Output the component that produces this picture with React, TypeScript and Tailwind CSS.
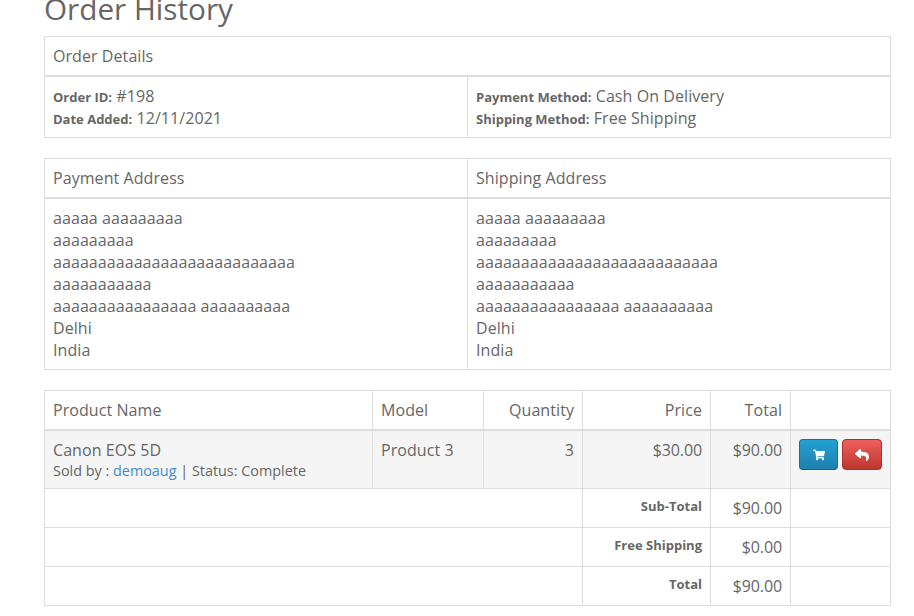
import type { ReactNode } from 'react';
import { FaShoppingCart, FaReply } from 'react-icons/fa';

const cell = 'border border-[#dddddd] p-2 align-top text-left font-normal';
const head = 'border border-b-2 border-[#dddddd] p-2 align-top font-normal';
const money = `${cell} !text-right tracking-[-0.1px]`;

const address = [
  'aaaaa aaaaaaaaa',
  'aaaaaaaaa',
  'aaaaaaaaaaaaaaaaaaaaaaaaaaa',
  'aaaaaaaaaaa',
  'aaaaaaaaaaaaaaaa aaaaaaaaaa',
  'Delhi',
  'India',
];

function AddressLines() {
  return (
    <>
      {address.map((line) => (
        <div key={line}>{line}</div>
      ))}
    </>
  );
}

function Label({ children }: { children: ReactNode }) {
  return <b className="text-[13px] font-bold leading-none tracking-normal">{children}</b>;
}

function TotalRow({ label, value }: { label: string; value: string }) {
  return (
    <tr>
      <td colSpan={3} className={cell}></td>
      <td className={`${cell} !text-right`}>
        <b className="block text-[13px] font-bold leading-[18px] tracking-normal">{label}</b>
      </td>
      <td className={money}>{value}</td>
      <td className={cell}></td>
    </tr>
  );
}

export default function App() {
  return (
    <div className="h-[616px] w-[914px] overflow-hidden bg-white pl-[44px] pr-[23px] font-['Open_Sans',sans-serif] text-[16px] leading-[22px] tracking-[0.07px] text-[#666666]">
      <h1 className="mt-[-8px] mb-[11px] text-[29.7px] font-normal leading-[33px] tracking-normal text-[#666666]">Order History</h1>

      {/* Order details */}
      <table className="mb-[20px] w-full table-fixed border-collapse">
        <thead>
          <tr>
            <td colSpan={2} className={head}>Order Details</td>
          </tr>
        </thead>
        <tbody>
          <tr>
            <td className={`${cell} w-1/2`}>
              <Label>Order ID:</Label> #198
              <br />
              <Label>Date Added:</Label> 12/11/2021
            </td>
            <td className={`${cell} w-1/2`}>
              <Label>Payment Method:</Label> Cash On Delivery
              <br />
              <Label>Shipping Method:</Label> Free Shipping
            </td>
          </tr>
        </tbody>
      </table>

      {/* Addresses */}
      <table className="mb-[20px] w-full table-fixed border-collapse">
        <thead>
          <tr>
            <td className={`${head} w-1/2`}>Payment Address</td>
            <td className={`${head} w-1/2`}>Shipping Address</td>
          </tr>
        </thead>
        <tbody>
          <tr>
            <td className={cell}><AddressLines /></td>
            <td className={cell}><AddressLines /></td>
          </tr>
        </tbody>
      </table>

      {/* Products */}
      <table className="w-full table-fixed border-collapse">
        <colgroup>
          <col className="w-[328px]" />
          <col className="w-[111px]" />
          <col className="w-[99px]" />
          <col className="w-[128px]" />
          <col className="w-[80px]" />
          <col />
        </colgroup>
        <thead>
          <tr>
            <td className={head}>Product Name</td>
            <td className={head}>Model</td>
            <td className={`${head} text-right`}>Quantity</td>
            <td className={`${head} text-right`}>Price</td>
            <td className={`${head} text-right`}>Total</td>
            <td className={head}></td>
          </tr>
        </thead>
        <tbody>
          <tr className="bg-[#f5f5f5]">
            <td className={cell}>
              Canon EOS 5D
              <div className="text-[14.4px] leading-[19px] tracking-normal">
                Sold by : <a className="text-[#428bca]">demoaug</a> | Status: Complete
              </div>
            </td>
            <td className={cell}>Product 3</td>
            <td className={`${cell} !text-right`}>3</td>
            <td className={money}>$30.00</td>
            <td className={money}>$90.00</td>
            <td className={`${cell} whitespace-nowrap`}>
              <div className="flex gap-[4px]">
                <button className="flex h-[31px] w-[39px] items-center justify-center rounded-[4px] border border-[#1f6f93] border-b-[#17607f] bg-gradient-to-b from-[#23a1d1] to-[#1f80b0] text-white">
                  <FaShoppingCart size={12} />
                </button>
                <button className="flex h-[31px] w-[40px] items-center justify-center rounded-[4px] border border-[#b0302c] bg-gradient-to-b from-[#ee5f5b] to-[#bd362f] text-white">
                  <FaReply size={14} />
                </button>
              </div>
            </td>
          </tr>
          <TotalRow label="Sub-Total" value="$90.00" />
          <TotalRow label="Free Shipping" value="$0.00" />
          <TotalRow label="Total" value="$90.00" />
        </tbody>
      </table>
    </div>
  );
}
